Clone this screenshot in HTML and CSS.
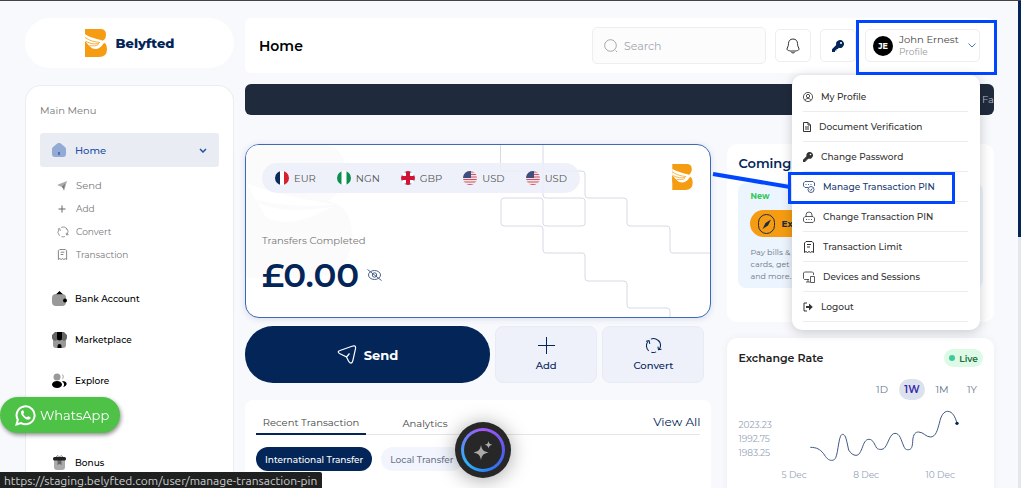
FILE: index.html
```
<!DOCTYPE html>
<html lang="en">
<head>
    <meta charset="UTF-8">
    <meta name="viewport" content="width=device-width, initial-scale=1.0">
    <title>Belyfted - Home</title>
    <link rel="stylesheet" href="styles.css">
</head>
<body>
    <!-- shared icons -->
    <svg class="defs" width="0" height="0" aria-hidden="true">
        <symbol id="logo" viewBox="0 0 22 28">
            <path d="M0 0h15.500q5.500 0 5.500 5.500 0 4.500-3.500 6.500 4.500 2.500 4.500 8 0 8-8 8H0z" fill="#f59c12"/>
            <path d="M0 5.200C6 9 13 10 18.500 11.800L22 13l-3.500 1.500C16 19 12 21 7.500 19.500 5 18 2 14.500 0 12z" fill="#fff"/>
            <path d="M0 8.500c5 3.500 10 4.500 15 5M1 12.500c5 2.500 9 2.800 13 2M4.500 16.500c4 .8 7 .2 9-1" fill="none" stroke="#f59c12" stroke-width="0.800"/>
            <path d="M0 12.500c1.500 2.500 4 5.500 7 7.200L0 20z" fill="#f59c12"/>
        </symbol>
        <symbol id="flag-us" viewBox="0 0 14 14">
            <g clip-path="url(#round)">
                <path d="M0 0h14v14H0z" fill="#f3e4e7"/>
                <path d="M0 1h14M0 3.500h14M0 6h14M0 8.500h14M0 11h14M0 13.500h14" stroke="#cf5266" stroke-width="1.200"/>
                <path d="M0 0h8v7H0z" fill="#3c4f80"/>
            </g>
        </symbol>
        <symbol id="convert" viewBox="0 0 16 16">
            <path d="M3.500 13A6.500 6.500 0 0 1 2.500 4.500M5.500 2a6.500 6.500 0 0 1 8.300 3M12.500 3a6.500 6.500 0 0 1 1 8.500M10.500 14a6.500 6.500 0 0 1-4.500.3M1 4l2.800-.5.7 3M15.500 11.500l-2.800.5-.5-3" fill="none" stroke="currentColor"/>
        </symbol>
        <symbol id="key" viewBox="0 0 12 12">
            <path d="M8 0a4 4 0 1 1-1.200 7.800L5.800 9H4.500v1.400H3V12H0V9.300l4.200-4.200A4 4 0 0 1 8 0zm1 2a1 1 0 1 0 .01 2A1 1 0 0 0 9 2z" fill="currentColor" fill-rule="evenodd"/>
        </symbol>
        <symbol id="receipt" viewBox="0 0 12 12">
            <path d="M1.500 11.500V2L3 .5h6L10.500 2v9.500L9 10.500l-1.500 1-1.500-1-1.500 1-1.500-1zM4 3.500h4M4 6h3" fill="none" stroke="currentColor"/>
        </symbol>
        <clipPath id="round"><circle cx="7" cy="7" r="7"/></clipPath>
    </svg>

    <div class="app">
        <aside class="sidebar">
            <a class="brand" href="#">
                <svg width="22" height="28"><use href="#logo"/></svg>
                <span>Belyfted</span>
            </a>

            <nav class="menu">
                <p class="menu-title">Main Menu</p>
                <a class="menu-home" href="#">
                    <svg width="14" height="14" viewBox="0 0 14 14"><path d="M5 .8a3 3 0 0 1 4 0l4 3.200a3 3 0 0 1 1 2v5a3 3 0 0 1-3 3H3a3 3 0 0 1-3-3V6a3 3 0 0 1 1-2z" fill="#93aad5"/><path d="M7 9v3" stroke="#1d4aa0" stroke-width="1.200"/></svg>
                    <span>Home</span>
                    <svg class="caret" width="8" height="5" viewBox="0 0 8 5"><path d="M1 1l3 3 3-3" fill="none" stroke="#2350a8" stroke-width="1.500"/></svg>
                </a>
                <ul class="submenu">
                    <li><a class="large" href="#"><svg width="10" height="10" viewBox="0 0 10 10"><path d="M0 4l10-4-3 10-2-4z" fill="#aaa"/><path d="M5 6l3-3.500L7 8z" fill="#777"/></svg>Send</a></li>
                    <li><a href="#"><svg width="10" height="10" viewBox="0 0 10 10"><path d="M5 1.500v7M1.500 5h7" stroke="#666"/></svg>Add</a></li>
                    <li><a href="#"><svg width="12" height="12"><use href="#convert"/></svg>Convert</a></li>
                    <li><a href="#"><svg width="11" height="11"><use href="#receipt"/></svg>Transaction</a></li>
                </ul>
                <ul class="main-links">
                    <li><a href="#"><svg width="15" height="15" viewBox="0 0 15 15"><path d="M4 4l3.500-4L11 4z" fill="#000"/><rect y="3" width="14" height="12" rx="4" fill="#999"/><path d="M4 3.200L7.500.5 11 3.200z"/><rect x="11" y="7.500" width="4" height="4" rx="2"/></svg>Bank Account</a></li>
                    <li><a href="#"><svg width="15" height="16" viewBox="0 0 15 16"><rect x="1" y="5" width="13" height="11" rx="3" fill="#999"/><path d="M3 0h9l3 3v3a3 3 0 0 1-5 2H5a3 3 0 0 1-5-2V3z" fill="#666"/><path d="M5 0h5v6a2.500 2.500 0 0 1-5 0z"/><path d="M5.500 16v-2a2 2 0 0 1 4 0v2z"/></svg>Marketplace</a></li>
                    <li><a href="#"><svg width="15" height="15" viewBox="0 0 15 15"><circle cx="5" cy="4" r="3.500" fill="#999"/><path d="M10 1a3 3 0 0 1 0 5.500q1.500-2.500 0-5.500z" fill="#aaa"/><ellipse cx="5" cy="11.500" rx="5" ry="3.500"/><path d="M10 8c6 0 6 5 1 6 2-2 1-4-1-6z"/></svg>Explore</a></li>
                    <li class="last"><a href="#"><svg width="15" height="15" viewBox="0 0 15 15"><path d="M2 5h11v7a3 3 0 0 1-3 3H5a3 3 0 0 1-3-3z" fill="#aaa"/><path d="M5.500 5h4v5l-2-1-2 1z" fill="#666"/><path d="M4 2l2-1.500L7.500 2 9 .5 11 2" fill="none" stroke="#888"/><rect x="1" y="2" width="13" height="3.500" rx="1.500" fill="#222"/></svg>Bonus</a></li>
                </ul>
            </nav>
        </aside>

        <main class="main">
            <header class="topbar">
                <h1>Home</h1>
                <label class="search">
                    <svg width="14" height="14" viewBox="0 0 14 14"><circle cx="6.500" cy="6.500" r="5.800" fill="none" stroke="#a5a5b0"/><path d="M11.500 11.500l1.500 1.500" stroke="#a5a5b0"/></svg>
                    <input type="text" placeholder="Search" aria-label="Search">
                </label>
                <button class="icon-btn" aria-label="Notifications">
                    <svg width="14" height="16" viewBox="0 0 14 16"><path d="M7 1c3 0 4.500 2 4.500 4.500C11.500 9 13 9.500 13 11c0 1.500-2 2-6 2s-6-.5-6-2c0-1.500 1.500-2 1.500-5.500C2.500 3 4 1 7 1zM5 13.500c.5 2 3.500 2 4 0" fill="none" stroke="#333"/></svg>
                </button>
                <button class="icon-btn navy" aria-label="Password">
                    <svg width="12" height="12"><use href="#key"/></svg>
                </button>
                <div class="profile-wrap">
                    <button class="profile">
                        <span class="avatar">JE</span>
                        <span class="who"><span>John Ernest</span><small>Profile</small></span>
                        <svg width="8" height="5" viewBox="0 0 8 5"><path d="M.5.5L4 4 7.500.5" fill="none" stroke="#4777bd"/></svg>
                    </button>
                    <div class="mark mark-profile"></div>
                    <div class="dropdown">
                        <svg class="pointer" width="78" height="18" viewBox="0 0 78 18"><path d="M1 3l77 13" stroke="#0045ff" stroke-width="4"/></svg>
                        <a href="#"><svg width="10" height="10" viewBox="0 0 12 12"><g fill="none" stroke="currentColor"><circle cx="6" cy="6" r="5.500"/><circle cx="6" cy="4.800" r="2"/><path d="M2.500 10c1-3 6-3 7 0"/></g></svg>My Profile</a>
                        <a href="#"><svg width="8" height="10" viewBox="0 0 8 10"><path d="M.5.5h4.500l2.500 2.500v6.500h-7zM5 .5V3h2.500M2 5h4M2 7h4" fill="none" stroke="currentColor"/></svg>Document Verification</a>
                        <a href="#"><svg width="10" height="10"><use href="#key"/></svg>Change Password</a>
                        <a href="#" class="active"><svg width="12" height="12" viewBox="0 0 12 12"><g fill="none" stroke="currentColor" stroke-width=".8"><path d="M5 6.500H2L.5 5V2L2 .5h8L11.500 2v3M2.500 3.500h1M5 3.500h1M7.500 3.500h1"/><circle cx="8" cy="8.500" r="3"/><path d="M6.800 8.500l1 1 1.500-2"/></g></svg>Manage Transaction PIN<span class="mark mark-item"></span></a>
                        <a href="#"><svg width="12" height="12" viewBox="0 0 12 12"><path d="M3 5.500V4a3 3 0 0 1 6 0v1.500M2 5.500h8l1.500 1.500v3L10 11.500H2L.5 10V7zM3 8.500h1M5.500 8.500h1M8 8.500h1" fill="none" stroke="currentColor" stroke-width=".8"/></svg>Change Transaction PIN</a>
                        <a href="#"><svg width="12" height="12"><use href="#receipt"/></svg>Transaction Limit</a>
                        <a href="#"><svg width="12" height="12" viewBox="0 0 12 12"><path d="M6 8.500H1.500L.5 7.500V2l1-1h8l1 1v2M5 8.500V11M3 11h4M7.500 5.500h4v6h-4z" fill="none" stroke="currentColor" stroke-width=".8"/></svg>Devices and Sessions</a>
                        <a href="#"><svg width="10" height="10" viewBox="0 0 10 10"><path d="M4 1H1v8h3" fill="none" stroke="currentColor"/><path d="M3 4h3V1.500L9.800 5 6 8.500V6H3z" fill="currentColor"/></svg>Logout</a>
                    </div>
                </div>
            </header>

            <div class="ticker"><span>Fast</span></div>

            <div class="columns">
                <div class="left">
                    <section class="balance">
                        <svg class="watermark" width="106" height="133" viewBox="0 0 106 133"><path d="M0 0h75c20 0 25 15 25 28 0 12-8 22-18 28 18 4 24 18 24 34 0 26-16 43-40 43H0z" fill="#fbfbfc"/><path d="M0 38c30 12 60 16 90 22-20 0-40 4-84-6 20 14 50 12 80 8-20 10-45 22-66 10" fill="#fff"/></svg>
                        <svg class="steps" width="210" height="173" viewBox="0 0 210 173"><path d="M.5 0v23q0 3 3 3H40q3 0 3 3v21q0 3 3 3h36q3 0 3 3v22q0 3-3 3H46q-3 0-3-3V56q0-3-3-3H4q-3 0-3 3v22q0 3 3 3h36q3 0 3 3v21q0 3 3 3h36q3 0 3 3v22q0 3 3 3h36q3 0 3 3v21q0 3 3 3h37q3 0 3 3v7M43 0v23q0 3 3 3h36q3 0 3 3v21q0 3 3 3h36q3 0 3 3v22q0 3 3 3h37q3 0 3 3v21q0 3 3 3h37" fill="none" stroke="#d5dae3"/></svg>
                        <svg class="card-logo" width="21" height="26"><use href="#logo"/></svg>
                        <ul class="currencies">
                            <li><svg width="14" height="14" viewBox="0 0 14 14"><g clip-path="url(#round)"><path d="M0 0h14v14H0z" fill="#fff"/><path d="M0 0h5v14H0z" fill="#0a2a5e"/><path d="M9 0h5v14H9z" fill="#d6202f"/></g></svg>EUR</li>
                            <li><svg width="14" height="14" viewBox="0 0 14 14"><g clip-path="url(#round)"><path d="M0 0h14v14H0z" fill="#fff"/><path d="M0 0h4.500v14H0zM9.500 0H14v14H9.500z" fill="#0b8f50"/></g></svg>NGN</li>
                            <li><svg width="14" height="14" viewBox="0 0 14 14"><g clip-path="url(#round)"><path d="M0 0h14v14H0z" fill="#fff"/><path d="M2 0h2.500v2zM9.500 0H12L9.500 2zM2 14h2.500v-2zM9.500 14H12l-2.500-2zM0 3l2 1.500H0zM14 3l-2 1.500h2zM0 11l2-1.500H0zM14 11l-2-1.500h2z" fill="#283a80"/><path d="M7 0v14M0 7h14" stroke="#d11435" stroke-width="4"/></g></svg>GBP</li>
                            <li><svg width="14" height="14"><use href="#flag-us"/></svg>USD</li>
                            <li><svg width="14" height="14"><use href="#flag-us"/></svg>USD</li>
                        </ul>
                        <p class="caption">Transfers Completed</p>
                        <p class="amount">£0.00
                            <svg width="15" height="12" viewBox="0 0 15 12"><g fill="none" stroke="#4a6088"><ellipse cx="7.500" cy="6" rx="6" ry="4.500"/><circle cx="7.500" cy="6" r="2.200"/><path d="M.5.5l14 11"/></g></svg>
                        </p>
                    </section>

                    <div class="actions">
                        <button class="send">
                            <svg width="20" height="20" viewBox="0 0 20 20"><path d="M3 5.500L15 1.200c2.500-.9 4-.2 3.500 2.500L16 15c-.8 4-3 4-4.500 1L9.500 12 3.500 9C.5 7.500.5 6.300 3 5.500zM9.500 12L12.500 8.500" fill="none" stroke="#fff" stroke-width="1.200"/></svg>
                            Send
                        </button>
                        <button class="soft">
                            <svg width="17" height="17" viewBox="0 0 17 17"><path d="M8.500 0v17M0 8.500h17" stroke="#032557"/></svg>
                            Add
                        </button>
                        <button class="soft">
                            <svg width="17" height="17"><use href="#convert"/></svg>
                            Convert
                        </button>
                    </div>

                    <section class="transactions">
                        <div class="tabs">
                            <button class="tab current">Recent Transaction</button>
                            <button class="tab">Analytics</button>
                            <a href="#">View All</a>
                        </div>
                        <div class="filters">
                            <button class="current">International Transfer</button>
                            <button>Local Transfer</button>
                        </div>
                    </section>
                </div>

                <div class="right">
                    <section class="coming">
                        <h2>Coming Soon</h2>
                        <div class="promo">
                            <p class="new">New</p>
                            <button class="explore">
                                <svg width="18" height="20" viewBox="0 0 18 20"><rect x=".5" y=".5" width="16" height="19" rx="8" fill="none" stroke="#1c2b45"/><path d="M13 5.500l-3 6-5.500 3.500 3-6z" fill="#1c2b45"/></svg>
                                Explore
                            </button>
                            <p class="desc">Pay bills &amp; airtime,<br>cards, get loans<br>and more...</p>
                        </div>
                    </section>

                    <section class="rates">
                        <div class="rates-head">
                            <h2>Exchange Rate</h2>
                            <span class="live">Live</span>
                        </div>
                        <div class="ranges">
                            <button>1D</button>
                            <button class="current">1W</button>
                            <button>1M</button>
                            <button>1Y</button>
                        </div>
                        <div class="chart">
                            <ul>
                                <li>2023.23</li>
                                <li>1992.75</li>
                                <li>1983.25</li>
                            </ul>
                            <svg width="152" height="54" viewBox="264 237 456 162"><path d="M271 352C290 352 300 358 310 370C320 385 325 391 335 391C345 391 348 385 352 365C358 330 360 313 368 313C378 313 380 335 386 360C392 370 400 376 408 376C418 376 422 365 428 350C434 332 440 328 447 328C460 328 464 345 470 354C475 360 490 360 495 352C505 340 510 310 525 310C540 310 543 330 551 348C556 360 560 359 565 359C575 359 577 350 578 335C579 310 588 306 596 306C610 306 618 321 631 321C648 321 652 300 658 280C663 255 672 244 683 244C698 244 706 262 711 280" fill="none" stroke="#3f5880" stroke-width="3"/><circle cx="711" cy="280" r="5" fill="#032557"/></svg>
                        </div>
                        <div class="dates"><span>5 Dec</span><span>8 Dec</span><span>10 Dec</span></div>
                    </section>
                </div>
            </div>
        </main>
    </div>

    <a class="whatsapp" href="#">
        <svg width="21" height="21" viewBox="0 0 21 21"><path d="M1.500 19.500l1.300-4.700a9 9 0 1 1 3.300 3.300z" fill="none" stroke="#fff" stroke-width="2"/><path d="M7 5.500c-1.500 1-1.500 3 .5 5.500 2.500 3.200 5.500 4.500 7.500 3 .8-.8.800-1.500.4-1.800l-1.900-1c-.8-.2-1 1-1.700 1-1.500-.4-3-1.800-3.500-3.200 0-.6.900-.9.800-1.500L8.300 5.600c-.3-.4-.9-.4-1.300-.1z" fill="#fff"/></svg>
        WhatsApp
    </a>

    <button class="assistant" aria-label="Assistant">
        <span class="ring">
            <svg width="20" height="20" viewBox="0 0 20 20"><path d="M8 5c1 5 2.500 6.500 7.500 7.500-5 1-6.500 2.500-7.500 7.500-1-5-2.500-6.500-7.500-7.500C5.500 11.500 7 10 8 5zM15.500 1c.5 2.500 1.300 3.300 3.800 3.800-2.500.5-3.300 1.300-3.800 3.800-.5-2.500-1.300-3.300-3.800-3.800 2.500-.5 3.300-1.300 3.800-3.800z" fill="#aaa"/></svg>
        </span>
    </button>

    <div class="status">https://staging.belyfted.com/user/manage-transaction-pin</div>
    <div class="scrollbar"></div>
</body>
</html>
```
FILE: styles.css
```
* {
    box-sizing: border-box;
    margin: 0;
    padding: 0;
}

body {
    height: 100vh;
    overflow: hidden;
    background: #f8f9fd;
    border-top: 1px solid #444;
    font-family: Montserrat, Inter, sans-serif;
    font-size: 10px;
    color: #222;
}

a {
    color: inherit;
    text-decoration: none;
}

button, input {
    font: inherit;
    color: inherit;
    border: none;
    background: none;
}

button {
    cursor: pointer;
}

ul {
    list-style: none;
}

svg {
    flex-shrink: 0;
}

.defs {
    position: absolute;
}

.app {
    display: flex;
    gap: 11px;
    height: 100%;
    padding: 17px 27px 0 25px;
    overflow: hidden;
}

/* sidebar */
.sidebar {
    display: flex;
    flex-direction: column;
    flex: 0 0 209px;
}

.brand {
    display: flex;
    align-items: center;
    justify-content: center;
    gap: 9px;
    height: 50px;
    border-radius: 25px;
    background: #fff;
    color: #032557;
    font-size: 13px;
    font-weight: 800;
}

.menu {
    flex: 1;
    margin-top: 17px;
    padding: 13px 14px 0;
    background: #fff;
    border: 1px solid #ebedf0;
    border-bottom: none;
    border-radius: 16px 16px 0 0;
}

.menu-title {
    color: #777;
    font-size: 10px;
    line-height: 24px;
}

.menu-home {
    display: flex;
    align-items: center;
    gap: 9px;
    height: 34px;
    margin-top: 10px;
    padding: 0 12px;
    border-radius: 3px;
    background: #e9edf3;
    color: #2350a8;
    font-weight: 500;
}

.caret {
    margin-left: auto;
}

.submenu {
    margin-top: 7px;
}

.submenu a {
    display: grid;
    grid-template-columns: 12px 1fr;
    gap: 7px;
    align-items: center;
    justify-items: start;
    height: 23px;
    padding-left: 17px;
    color: #777;
    font-size: 9px;
}

.submenu .large {
    font-size: 10px;
}

.main-links {
    margin-top: 12px;
}

.main-links a {
    display: flex;
    align-items: center;
    gap: 8px;
    height: 41px;
    padding-left: 12px;
    color: #000;
    font-size: 9px;
    font-weight: 500;
}

.main-links .last {
    margin-top: 41px;
}

/* top bar */
.main {
    flex: 1;
    min-width: 0;
}

.topbar {
    display: flex;
    align-items: center;
    gap: 9px;
    height: 55px;
    padding: 0 14px;
    border-radius: 6px;
    background: #fff;
}

h1 {
    margin-right: auto;
    color: #000;
    font-size: 14px;
    font-weight: 600;
}

.search {
    display: flex;
    align-items: center;
    gap: 6px;
    width: 174px;
    height: 37px;
    padding: 0 11px;
    border: 1px solid #eee;
    border-radius: 5px;
    background: #fcfcfc;
}

.search input {
    width: 100%;
    min-width: 0;
    font-size: 11px;
}

.search input::placeholder {
    color: #a5a5b0;
}

.icon-btn, .profile {
    display: flex;
    align-items: center;
    justify-content: center;
    width: 36px;
    height: 33px;
    border: 1px solid #eee;
    border-radius: 5px;
}

.navy {
    color: #032557;
}

.profile-wrap {
    position: relative;
}

.profile {
    width: 115px;
    gap: 6px;
    justify-content: flex-start;
    padding-left: 7px;
}

.profile svg {
    margin-left: auto;
    margin-right: 3px;
}

.avatar {
    flex: 0 0 20px;
    height: 20px;
    border-radius: 50%;
    background: #000;
    color: #fff;
    font-size: 8px;
    font-weight: 700;
    line-height: 20px;
}

.who {
    display: flex;
    flex-direction: column;
    text-align: left;
    color: #444;
    line-height: 12px;
    white-space: nowrap;
}

.who small {
    color: #999;
    font-size: 9px;
    line-height: 11px;
}

.mark {
    position: absolute;
    border: 3px solid #0045ff;
    pointer-events: none;
    z-index: 3;
}

.mark-profile {
    inset: -9px -17px -13px -9px;
}

.mark-item {
    inset: 0 13px -3px -15px;
}

.dropdown {
    position: absolute;
    top: 46px;
    right: 0;
    width: 188px;
    padding: 7px 12px 8px 11px;
    border-radius: 10px;
    background: #fff;
    box-shadow: 0 2px 12px rgba(0, 0, 0, 0.2);
    z-index: 2;
}

.dropdown a {
    position: relative;
    display: flex;
    align-items: center;
    gap: 8px;
    height: 30px;
    border-bottom: 1px solid #ececec;
    color: #333;
    font-size: 9px;
    font-weight: 500;
}

.dropdown .active {
    color: #1a3a70;
}

.pointer {
    position: absolute;
    top: 96px;
    left: -80px;
}

.ticker {
    display: flex;
    justify-content: flex-end;
    height: 31px;
    margin-top: 11px;
    border-radius: 6px;
    background: #1f2a3c;
    color: #b5bcc8;
    line-height: 31px;
    overflow: hidden;
}

.ticker span {
    width: 12px;
    min-width: 0;
}

.columns {
    display: grid;
    grid-template-columns: 7fr 4fr;
    gap: 16px;
    margin-top: 29px;
}

.left, .right {
    min-width: 0;
}

/* balance card */
.balance {
    position: relative;
    height: 174px;
    padding: 18px 16px;
    border: 1px solid #3b6bb5;
    border-radius: 14px;
    background: #fff;
    box-shadow: 0 1px 6px rgba(30, 60, 120, 0.15);
    overflow: hidden;
}

.watermark, .steps {
    position: absolute;
    top: 0;
}

.watermark {
    left: 0;
}

.steps {
    right: 0;
}

.card-logo {
    position: absolute;
    top: 19px;
    right: 17px;
}

.currencies {
    display: flex;
    align-items: center;
    justify-content: space-between;
    width: 318px;
    height: 30px;
    padding: 0 13px;
    border-radius: 15px;
    background: rgba(235, 239, 249, 0.85);
    position: relative;
}

.currencies li {
    display: flex;
    align-items: center;
    gap: 5px;
    color: #555;
}

.caption {
    position: relative;
    margin-top: 40px;
    color: #777;
    line-height: 16px;
}

.amount {
    position: relative;
    display: flex;
    align-items: center;
    gap: 8px;
    margin-top: 4px;
    color: #032557;
    font-size: 34px;
    font-weight: 600;
    line-height: 44px;
}

/* actions */
.actions {
    display: grid;
    grid-template-columns: 12fr 5fr 5fr;
    gap: 5px;
    margin-top: 8px;
    padding-right: 7px;
}

.actions button {
    display: flex;
    align-items: center;
    justify-content: center;
    height: 57px;
}

.actions .send {
    gap: 7px;
    border-radius: 28px;
    background: #032557;
    color: #fff;
    font-size: 13px;
    font-weight: 700;
}

.actions .soft {
    flex-direction: column;
    gap: 5px;
    border: 1px solid #e8ebf3;
    border-radius: 8px;
    background: #eef1fa;
    color: #032557;
    font-weight: 500;
}

/* transactions */
.transactions {
    height: 200px;
    margin-top: 17px;
    padding: 11px;
    border-radius: 8px;
    background: #fff;
}

.tabs {
    display: flex;
    gap: 4px;
    height: 24px;
    border-bottom: 1px solid #e6e6e6;
    color: #444;
}

.tab {
    width: 110px;
    height: 24px;
    white-space: nowrap;
}

.tab.current {
    border-bottom: 2px solid #032557;
}

.tabs a {
    margin-left: auto;
    color: #032557;
    font-size: 12px;
    line-height: 22px;
}

.filters {
    display: flex;
    gap: 9px;
    margin-top: 12px;
}

.filters button {
    height: 24px;
    padding: 0 9px;
    border-radius: 12px;
    background: #f2f5fd;
    color: #6c7590;
    font-size: 9px;
    font-weight: 500;
}

.filters .current {
    background: #032557;
    color: #fff;
}

/* coming soon */
.coming, .rates {
    padding: 11px;
    border-radius: 10px;
    background: #fff;
}

.coming {
    height: 178px;
}

h2 {
    font-size: 12px;
    font-weight: 600;
    line-height: 16px;
}

.coming h2 {
    color: #032557;
    font-size: 13px;
}

.promo {
    height: 105px;
    margin-top: 12px;
    padding: 8px 12px;
    border-radius: 8px;
    background: #ecf4fd;
}

.new {
    color: #2fc956;
    font-size: 8px;
    font-weight: 700;
    line-height: 11px;
}

.explore {
    display: flex;
    align-items: center;
    gap: 5px;
    height: 27px;
    margin-top: 8px;
    padding: 0 14px 0 8px;
    border-radius: 14px;
    background: #f59c12;
    color: #1c2b45;
    font-size: 9px;
    font-weight: 700;
}

.desc {
    margin-top: 9px;
    color: #6b7688;
    font-size: 8px;
    line-height: 12px;
}

/* exchange rate */
.rates {
    height: 200px;
    margin-top: 16px;
    box-shadow: 0 0 8px rgba(0, 0, 0, 0.05);
}

.rates h2 {
    font-size: 11px;
}

.rates-head {
    display: flex;
    align-items: center;
    justify-content: space-between;
}

.live {
    display: flex;
    align-items: center;
    gap: 4px;
    height: 18px;
    padding: 0 5px;
    border-radius: 9px;
    background: #dcfae6;
    color: #1d6b41;
    font-size: 9px;
    font-weight: 600;
}

.live::before {
    content: "";
    width: 6px;
    height: 6px;
    border-radius: 50%;
    background: #40c99a;
}

.ranges {
    display: flex;
    justify-content: flex-end;
    gap: 4px;
    margin-top: 12px;
    margin-right: -2px;
}

.ranges button {
    width: 26px;
    height: 21px;
    border-radius: 11px;
    color: #64748b;
}

.ranges .current {
    background: #dbe2ee;
    color: #3727a8;
    font-weight: 600;
}

.chart {
    display: grid;
    grid-template-columns: 70px 1fr;
    align-items: end;
    margin-top: 9px;
    color: #94a3b8;
    font-size: 9px;
}

.chart ul {
    margin-bottom: 3px;
}

.chart li {
    line-height: 14px;
}

.dates {
    display: flex;
    justify-content: space-between;
    margin-top: 6px;
    padding: 0 28px 0 43px;
    color: #94a3b8;
    font-size: 9px;
    line-height: 12px;
}

/* floating parts */
.whatsapp {
    position: fixed;
    left: 0;
    bottom: 55px;
    display: flex;
    align-items: center;
    gap: 4px;
    height: 36px;
    padding: 0 11px 0 15px;
    border-radius: 18px;
    background: #4dc247;
    box-shadow: 1px 2px 4px rgba(0, 0, 0, 0.45);
    color: #fff;
    font-size: 13px;
}

.assistant {
    position: fixed;
    left: 455px;
    bottom: 10px;
    display: flex;
    align-items: center;
    justify-content: center;
    width: 56px;
    height: 56px;
    border-radius: 50%;
    background: #272727;
    box-shadow: 0 2px 20px rgba(0, 0, 0, 0.35);
}

.ring {
    display: flex;
    align-items: center;
    justify-content: center;
    width: 44px;
    height: 44px;
    border: 3px solid transparent;
    border-radius: 50%;
    background: linear-gradient(#272727, #272727) padding-box, conic-gradient(#a855f7, #4f5df0 100deg, #2b7bf5 160deg, #2fb4fa 230deg, #5b8bf8 290deg, #a855f7) border-box;
}

.status {
    position: fixed;
    left: 0;
    bottom: 0;
    height: 16px;
    padding: 0 5px 0 4px;
    border-radius: 0 2px 0 0;
    background: #1f2020;
    color: #ccc;
    font-family: Ubuntu, "Open Sans", sans-serif;
    font-size: 12px;
    line-height: 17px;
}

.scrollbar {
    position: fixed;
    top: 1px;
    right: 0;
    bottom: 0;
    width: 3px;
    background: linear-gradient(#032557 236px, #e6e7ec 236px);
}
```
